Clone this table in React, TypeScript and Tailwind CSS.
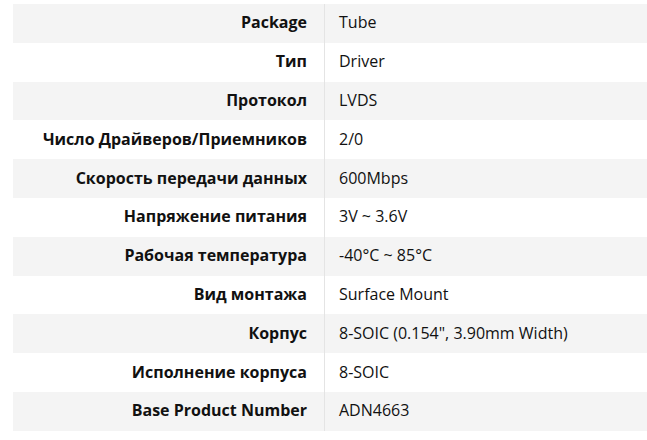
const rows: [string, string][] = [
  ["Package", "Tube"],
  ["Тип", "Driver"],
  ["Протокол", "LVDS"],
  ["Число Драйверов/Приемников", "2/0"],
  ["Скорость передачи данных", "600Mbps"],
  ["Напряжение питания", "3V ~ 3.6V"],
  ["Рабочая температура", "-40°C ~ 85°C"],
  ["Вид монтажа", "Surface Mount"],
  ["Корпус", "8-SOIC (0.154\", 3.90mm Width)"],
  ["Исполнение корпуса", "8-SOIC"],
  ["Base Product Number", "ADN4663"],
];

export default function App() {
  return (
    <div className="w-[647px] h-[440px] bg-white pt-[4px] pl-[13px] overflow-hidden font-['Open_Sans',sans-serif] text-[16px] text-[#111]">
      <div className="flex flex-col">
        {rows.map(([label, value], i) => (
          <div
            key={label}
            className={`flex h-[38.8px] ${i % 2 === 0 ? "bg-[#f4f4f4]" : "bg-white"}`}
          >
            <div className="w-[312px] flex items-center justify-end pr-[17px] pb-[2px] border-r border-[#e4e4e4] font-bold whitespace-nowrap">
              {label}
            </div>
            <div className="flex-1 flex items-center pl-[14px] pb-[2px] whitespace-nowrap">{value}</div>
          </div>
        ))}
      </div>
    </div>
  );
}
